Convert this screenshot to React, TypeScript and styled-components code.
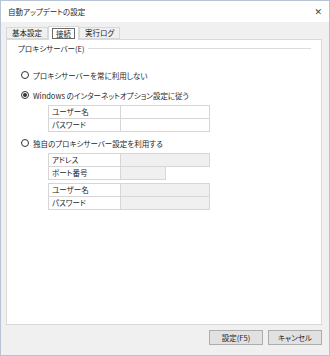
import styled, { createGlobalStyle } from "styled-components";

const GlobalStyle = createGlobalStyle`
  html, body {
    margin: 0;
    padding: 0;
    background: #ffffff;
  }
  * {
    box-sizing: border-box;
  }
`;

const font = `"Noto Sans CJK JP", "Noto Sans", sans-serif`;

const Window = styled.div`
  width: 330px;
  height: 356px;
  display: flex;
  flex-direction: column;
  border: 1px solid #b7c4d6;
  font-family: ${font};
  font-size: 7.5px;
  font-feature-settings: "palt";
  color: #262626;
  background: #f0f0f0;
`;

const TitleBar = styled.div`
  height: 21px;
  background: #ffffff;
  display: flex;
  align-items: center;
  justify-content: space-between;
  padding: 0 7px 0 7px;
`;

const Close = styled.span`
  font-family: "DejaVu Sans", sans-serif;
  font-size: 9px;
  color: #444;
`;

const Body = styled.div`
  flex: 1;
  display: flex;
  flex-direction: column;
  padding: 3px 7px 0 5px;
`;

const TabBar = styled.div`
  display: flex;
  align-items: flex-end;
  height: 14px;
`;

const Tab = styled.div<{ $active?: boolean }>`
  height: ${({ $active }) => ($active ? "14px" : "12px")};
  padding: ${({ $active }) => ($active ? "1px 3px" : "0 5px")};
  background: ${({ $active }) => ($active ? "#ffffff" : "#f0f0f0")};
  border: 1px solid #d9d9d9;
  border-bottom: ${({ $active }) => ($active ? "none" : "1px solid #d9d9d9")};
  display: flex;
  align-items: center;
  line-height: 1;
  position: relative;
  z-index: ${({ $active }) => ($active ? 1 : 0)};
  margin-bottom: ${({ $active }) => ($active ? "-1px" : "0")};
`;

const Focus = styled.span`
  border: 1px solid #6a6a6a;
  padding: 1px 3px;
`;

const Panel = styled.div`
  height: 286px;
  background: #ffffff;
  border: 1px solid #d9d9d9;
  padding: 2px 10px 0 11px;
  display: flex;
  flex-direction: column;
`;

const GroupHeader = styled.div`
  display: flex;
  align-items: center;
  gap: 3px;
  height: 12px;
`;

const GroupLine = styled.div`
  flex: 1;
  height: 1px;
  background: #dcdcdc;
`;

const RadioRow = styled.div<{ $top: number }>`
  display: flex;
  align-items: center;
  gap: 4px;
  height: 12px;
  margin: ${({ $top }) => `${$top}px 0 0 3px`};
`;

const Radio = styled.span<{ $checked?: boolean }>`
  width: 8px;
  height: 8px;
  border-radius: 50%;
  border: 1px solid #333;
  background: #fff;
  display: flex;
  align-items: center;
  justify-content: center;
  &::after {
    content: "";
    width: 4px;
    height: 4px;
    border-radius: 50%;
    background: ${({ $checked }) => ($checked ? "#333" : "transparent")};
  }
`;

const Table = styled.div`
  margin: 4px 0 0 30px;
  display: flex;
  flex-direction: column;
`;

const Row = styled.div`
  display: flex;
  height: 14px;
  margin-top: -1px;
  &:first-child {
    margin-top: 0;
  }
`;

const Label = styled.div`
  width: 73px;
  border: 1px solid #d6d6d6;
  padding-left: 3px;
  display: flex;
  align-items: center;
  line-height: 1;
`;

const Value = styled.div<{ $disabled?: boolean; $width?: number }>`
  width: ${({ $width }) => ($width ? `${$width}px` : "90px")};
  margin-left: -1px;
  border: 1px solid #d6d6d6;
  background: ${({ $disabled }) => ($disabled ? "#f0f0f0" : "#ffffff")};
`;

const Gap = styled.div`
  height: 4px;
`;

const Footer = styled.div`
  display: flex;
  justify-content: flex-end;
  gap: 5px;
  padding-top: 5px;
`;

const Button = styled.button`
  width: 54px;
  height: 15px;
  padding: 0;
  font-family: ${font};
  font-size: 7.5px;
  font-feature-settings: "palt";
  color: #262626;
  background: #e1e1e1;
  border: 1px solid #adadad;
  line-height: 1;
`;

const App = () => {
  return (
    <>
      <GlobalStyle />
      <Window>
        <TitleBar>
          <span>自動アップデートの設定</span>
          <Close>✕</Close>
        </TitleBar>
        <Body>
          <TabBar>
            <Tab>基本設定</Tab>
            <Tab $active>
              <Focus>接続</Focus>
            </Tab>
            <Tab>実行ログ</Tab>
          </TabBar>
          <Panel>
            <GroupHeader>
              <span>プロキシサーバー(E)</span>
              <GroupLine />
            </GroupHeader>
            <RadioRow $top={15}>
              <Radio />
              <span>プロキシサーバーを常に利用しない</span>
            </RadioRow>
            <RadioRow $top={8}>
              <Radio $checked />
              <span>Windows のインターネットオプション設定に従う</span>
            </RadioRow>
            <Table>
              <Row>
                <Label>ユーザー名</Label>
                <Value />
              </Row>
              <Row>
                <Label>パスワード</Label>
                <Value />
              </Row>
            </Table>
            <RadioRow $top={5}>
              <Radio />
              <span>独自のプロキシサーバー設定を利用する</span>
            </RadioRow>
            <Table>
              <Row>
                <Label>アドレス</Label>
                <Value $disabled />
              </Row>
              <Row>
                <Label>ポート番号</Label>
                <Value $disabled $width={46} />
              </Row>
              <Gap />
              <Row>
                <Label>ユーザー名</Label>
                <Value $disabled />
              </Row>
              <Row>
                <Label>パスワード</Label>
                <Value $disabled />
              </Row>
            </Table>
          </Panel>
          <Footer>
            <Button>設定(F5)</Button>
            <Button>キャンセル</Button>
          </Footer>
        </Body>
      </Window>
    </>
  );
};

export default App;
